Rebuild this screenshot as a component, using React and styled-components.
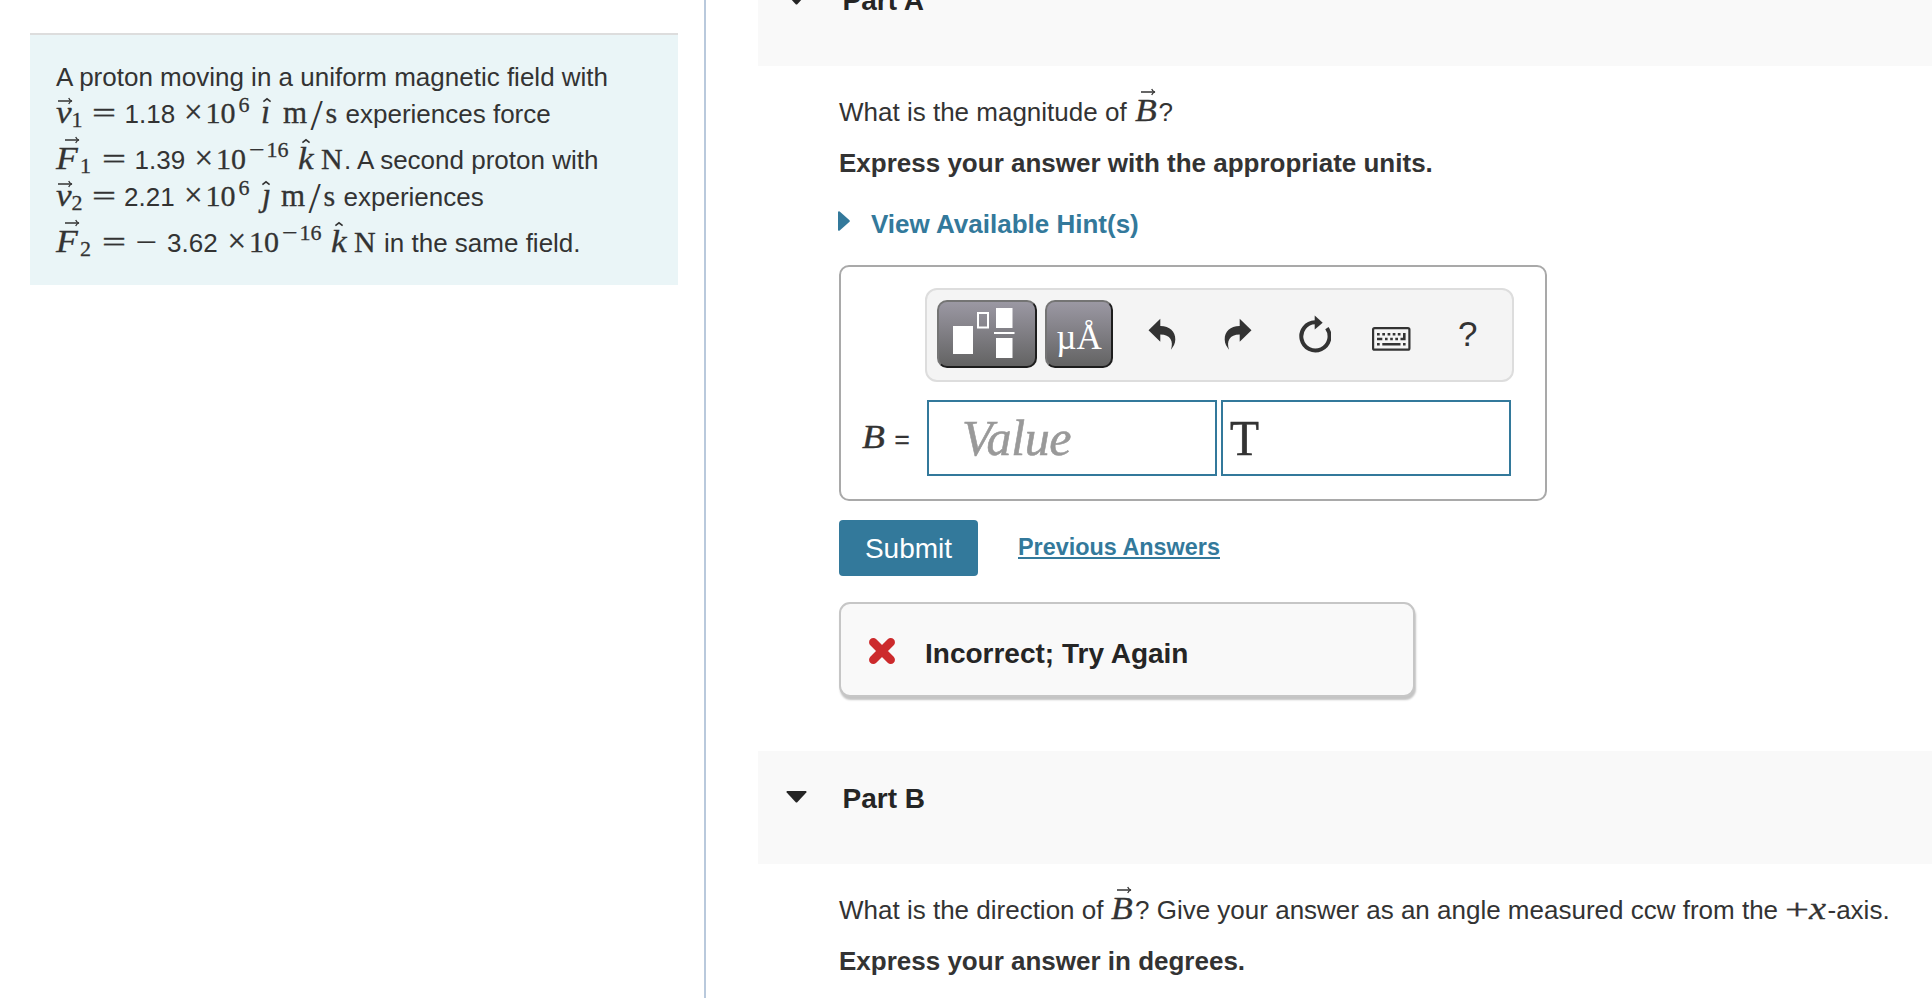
import React from "react"
import styled, { createGlobalStyle } from "styled-components"

const theme = {
  ink: "#333333",
  heading: "#252525",
  teal: "#33799b",
  band: "#f9f9f9",
  red: "#cc2a2c",
}

const { ink, heading, teal, band, red } = theme

const GlobalStyle = createGlobalStyle`
  html, body {
    margin: 0;
    background: #fff;
    overflow: hidden;
  }
`

const Page = styled.div`
  display: flex;
  width: 1932px;
  height: 998px;
  overflow: hidden;
  box-sizing: border-box;
  color: ${ink};
  font-family: "Liberation Sans", Arial, sans-serif;
  font-size: 26px;
  line-height: 36px;
`

const ProblemPane = styled.aside`
  flex: none;
  box-sizing: border-box;
  width: 706px;
  padding: 33px 26px 0 30px;
  border-right: 2px solid #b9c9dc;
`

const ProblemCard = styled.section`
  box-sizing: border-box;
  height: 252px;
  padding: 24px 0 0 26px;
  border-top: 2px solid #dddddd;
  background: #eaf5f7;
`

const Line = styled.div`
  display: flex;
  align-items: baseline;
  height: 36px;
  margin-top: ${(p) => p.$gap || 0}px;
  white-space: pre;
`

const Run = styled.span`
  flex: none;
  width: ${(p) => (p.$w ? `${p.$w}px` : "auto")};
`

const MathRun = styled(Run)`
  font-family: "Liberation Serif", "Times New Roman", serif;
  font-size: ${(p) => p.$size || 30}px;
  line-height: 30px;
  -webkit-text-stroke: 0.3px ${ink};
`

const Script = styled.span`
  font-size: 22px;
  line-height: 0;
  vertical-align: ${(p) => p.$shift}px;
`

const Stretch = styled.span`
  display: inline-block;
  transform: scaleX(${(p) => p.$x});
  transform-origin: left;
`

const Minus = styled(Stretch)`
  margin-right: 5px;
`

const Slash = styled.span`
  font-size: 44px;
  line-height: 0;
  vertical-align: -7px;
  -webkit-text-stroke: 0;
`

const Letter = styled(MathRun)`
  position: relative;
  font-style: italic;

  svg {
    position: absolute;
    left: ${(p) => p.$ax}px;
    top: ${(p) => p.$ay}px;
    overflow: visible;
  }
`

const Arrow = () => (
  <svg width="15" height="8" viewBox="0 0 15 8" fill="none" stroke={ink}>
    <path d="M0 4H13.5" strokeWidth="1.5" />
    <path d="M10.7 1C11.3 2.8 12.3 3.6 14 4C12.3 4.4 11.3 5.2 10.7 7" strokeWidth="1.2" />
  </svg>
)

const Hat = () => (
  <svg width="8" height="4" viewBox="0 0 8 4" fill="none" stroke={ink}>
    <path d="M.4 3.7L4 .8L7.6 3.7" strokeWidth="1.6" />
  </svg>
)

const Velocity = ({ n }) => (
  <>
    <Letter $w={15.5} $size={32} $ax={1.5} $ay={-0.5}><Stretch $x={1.1}>v</Stretch><Arrow /></Letter>
    <MathRun $w={20}><Script $shift={-3.5}>{n}</Script></MathRun>
  </>
)

const Force = ({ n }) => (
  <>
    <Letter $w={24} $size={31} $ax={9} $ay={-8.5}><Stretch $x={1.15}>F</Stretch><Arrow /></Letter>
    <MathRun $w={22}><Script $shift={-3.5}>{n}</Script></MathRun>
  </>
)

const Equals = ({ w }) => (
  <MathRun $w={w}><Stretch $x={1.42}>=</Stretch></MathRun>
)

const Times = () => <MathRun $w={21.5} $size={33}>×</MathRun>

const Exponent = ({ children }) => (
  <MathRun $w={49}>
    <Script $shift={12}><Minus $x={1.25}>−</Minus>{children}</Script>
  </MathRun>
)

const MetersPerSecond = ({ w }) => (
  <>
    <MathRun $w={27.5} $size={31}>m</MathRun>
    <MathRun $w={15}><Slash>/</Slash></MathRun>
    <MathRun $w={w}>s</MathRun>
  </>
)

const UnitK = () => (
  <Letter $w={23} $size={32} $ax={3.5} $ay={-4.5}><Stretch $x={1.1}>k</Stretch><Hat /></Letter>
)

const FieldB = ({ w }) => (
  <Letter $w={w} $size={31} $ax={6} $ay={-8.5}><Stretch $x={1.15}>B</Stretch><Arrow /></Letter>
)

const WorkPane = styled.main`
  flex: 1;
  min-width: 0;
  padding-left: 52px;
`

const PartHeader = styled.header`
  display: flex;
  align-items: flex-start;
  box-sizing: border-box;
  height: 113px;
  margin-top: ${(p) => p.$top}px;
  padding: 30px 0 0 28px;
  background: ${band};

  svg {
    flex: none;
    margin-top: 10px;
  }

  h2 {
    margin: 0 0 0 35.5px;
    color: ${heading};
    font-size: 28px;
    line-height: 36px;
  }
`

const PartBody = styled.section`
  padding: 28px 0 0 81px;
`

const Instruction = styled.p`
  margin: 15px 0 0;
  font-weight: bold;
`

const HintLink = styled.div`
  display: flex;
  align-items: flex-start;
  gap: 21px;
  margin: 25px 0 0 -1px;
  color: ${teal};
  font-weight: bold;

  svg {
    margin-top: 5px;
  }
`

const AnswerBox = styled.div`
  box-sizing: border-box;
  width: 708px;
  height: 236px;
  margin-top: 23px;
  padding: 21px 0 0 20px;
  border: 2px solid #a9a9a9;
  border-radius: 10px;
`

const Toolbar = styled.div`
  display: flex;
  align-items: center;
  box-sizing: border-box;
  width: 589px;
  height: 94px;
  margin-left: 64px;
  padding: 0 0 2px 10px;
  border: 2px solid #dddddd;
  border-radius: 12px;
  background: #f4f4f4;
`

const PaletteButton = styled.button`
  display: flex;
  align-items: center;
  justify-content: center;
  flex: none;
  box-sizing: border-box;
  width: ${(p) => p.$w}px;
  height: 68px;
  margin: 0 8px 0 0;
  padding: ${(p) => p.$pad || 0};
  border: 2px solid;
  border-color: #747474 #1d1d1d #1d1d1d #747474;
  border-radius: 10px;
  background: linear-gradient(#9b98a3, #636363);
  color: #fff;
  font: 35px/40px "Liberation Serif", serif;
`

const ToolSlots = styled.div`
  display: flex;
  align-items: center;
  margin-left: 2.5px;
`

const ToolSlot = styled.div`
  display: flex;
  align-items: center;
  justify-content: center;
  flex: none;
  box-sizing: border-box;
  width: 76.5px;
  height: 68px;
  padding-top: ${(p) => p.$drop || 0}px;
  font-size: 35px;
`

const TemplateIcon = () => (
  <svg width="62" height="52" viewBox="0 0 62 52" fill="#fff">
    <path d="M0 19H20V47H0ZM43 1H59.5V21H43ZM41 25H61.5V27H41ZM43 31H59.5V51H43Z" />
    <path d="M25 6H35V20.5H25Z" fill="none" stroke="#fff" strokeWidth="2" />
  </svg>
)

const CurvedArrow = ({ flip }) => (
  <svg width="28" height="32" viewBox="0 0 28 32" fill={ink}>
    <path
      transform={flip ? "translate(28 0) scale(-1 1)" : undefined}
      d="M.5 12.2L12.3.7V8.1C21.5 8 27.5 13.5 27.3 21.5C27.2 25.6 25.5 28.6 22.9 31.7C25.8 23 22.5 16.4 12.3 16.4V23.8Z"
    />
  </svg>
)

const ResetIcon = () => (
  <svg width="32" height="38" viewBox="0 0 32 38">
    <path d="M16 7.3A14.1 14.1 0 1 0 27.9 13.2" fill="none" stroke={ink} strokeWidth="4" />
    <path d="M15.7.5L23.7 7.8L15.7 14.5Z" fill={ink} />
  </svg>
)

const KeyboardIcon = () => (
  <svg width="39" height="24" viewBox="0 0 39 24" fill={ink}>
    <rect x="1.1" y="1.1" width="36.3" height="21.6" rx="1.5" fill="none" stroke={ink} strokeWidth="2.2" />
    <path d="M5 6H7.7V8.5H5ZM10.3 6H13V8.5H10.3ZM15.6 6H18.3V8.5H15.6ZM20.7 6H23.4V8.5H20.7ZM25.8 6H28.5V8.5H25.8ZM31 6H33.6V13.3H28.5V10.8H31Z" />
    <path d="M5 10.8H10.3V13.3H5ZM13 10.8H15.6V13.3H13ZM18.2 10.8H20.8V13.3H18.2ZM23.3 10.8H26V13.3H23.3ZM5 16H7.7V18.5H5ZM10.3 16H28.5V18.5H10.3ZM31 16H33.6V18.5H31Z" />
  </svg>
)

const EntryRow = styled.div`
  display: flex;
  align-items: center;
  margin-top: 18px;
`

const EntryLabel = styled.label`
  display: flex;
  align-items: baseline;
  flex: none;
  box-sizing: border-box;
  width: 66px;
  height: 38px;
  padding-left: 1px;
  -webkit-text-stroke: 0.4px ${ink};
`

const LabelSymbol = styled.span`
  width: 32.5px;
  font: italic 34px/36px "Liberation Serif", serif;

  span {
    display: inline-block;
    transform: scaleX(1.1);
    transform-origin: left;
  }
`

const Entry = styled.div`
  flex: none;
  box-sizing: border-box;
  width: 290px;
  height: 76px;
  margin-right: 4px;
  padding-left: ${(p) => p.$indent}px;
  border: 2px solid ${teal};
  color: ${(p) => (p.$empty ? "#999999" : ink)};
  font: ${(p) => (p.$empty ? "italic 50px" : "51px")}/72px "Liberation Serif", serif;
  letter-spacing: ${(p) => (p.$empty ? "-0.4px" : "0")};
  -webkit-text-stroke: 0.6px ${(p) => (p.$empty ? "#999999" : ink)};
`

const Actions = styled.div`
  display: flex;
  align-items: flex-start;
  gap: 40px;
  margin-top: 19px;
`

const SubmitButton = styled.button`
  width: 139px;
  height: 56px;
  padding: 2px 0 0;
  border: 0;
  border-radius: 4px;
  background: ${teal};
  color: #fff;
  font: 28px/54px "Liberation Sans", Arial, sans-serif;
`

const PreviousLink = styled.a`
  box-sizing: border-box;
  height: 30px;
  margin-top: 9px;
  border-bottom: 2px solid ${teal};
  color: ${teal};
  font-size: 23.4px;
  font-weight: bold;
  line-height: 36px;
`

const Feedback = styled.div`
  display: flex;
  align-items: center;
  gap: 29px;
  box-sizing: border-box;
  width: 576px;
  height: 95px;
  margin-top: 26px;
  padding: 9px 0 0 27px;
  border: 2px solid #c6c6c6;
  border-radius: 11px;
  background: ${band};
  box-shadow: 1px 3px 2px #c4c4c4;
  color: ${heading};
  font-size: 28px;
  font-weight: bold;

  svg {
    margin-top: -6px;
  }
`

const Part = ({ name, top, children }) => (
  <>
    <PartHeader $top={top}>
      <svg width="21" height="12" viewBox="0 0 21 12" fill={heading}>
        <path d="M1 0H20Q21 .6 20.3 1.5L11.5 11Q10.5 12 9.5 11L.7 1.5Q0 .6 1 0Z" />
      </svg>
      <h2>{name}</h2>
    </PartHeader>
    <PartBody>{children}</PartBody>
  </>
)

const Problem = () => (
  <ProblemCard>
    <Line>
      <Run>A proton moving in a uniform magnetic field with</Run>
    </Line>
    <Line $gap={1}>
      <Velocity n="1" />
      <Equals w={33} />
      <Run $w={59.5}>1.18</Run>
      <Times />
      <MathRun $w={33}>10</MathRun>
      <MathRun $w={22.5}><Script $shift={11.5}>6</Script></MathRun>
      <Letter $w={22} $size={33} $ax={1.7} $ay={1}>ı<Hat /></Letter>
      <MetersPerSecond w={20} />
      <Run>experiences force</Run>
    </Line>
    <Line $gap={10}>
      <Force n="1" />
      <Equals w={32.5} />
      <Run $w={60}>1.39</Run>
      <Times />
      <MathRun $w={33}>10</MathRun>
      <Exponent>16</Exponent>
      <UnitK />
      <MathRun $w={23}>N</MathRun>
      <Run>. A second proton with</Run>
    </Line>
    <Line $gap={1}>
      <Velocity n="2" />
      <Equals w={32.5} />
      <Run $w={60}>2.21</Run>
      <Times />
      <MathRun $w={33}>10</MathRun>
      <MathRun $w={23.5}><Script $shift={11.5}>6</Script></MathRun>
      <Letter $w={19} $size={33} $ax={0} $ay={1}>ȷ<Hat /></Letter>
      <MetersPerSecond w={20} />
      <Run>experiences</Run>
    </Line>
    <Line $gap={10}>
      <Force n="2" />
      <Equals w={34} />
      <MathRun $w={31}><Stretch $x={1.25}>−</Stretch></MathRun>
      <Run $w={60.5}>3.62</Run>
      <Times />
      <MathRun $w={33}>10</MathRun>
      <Exponent>16</Exponent>
      <UnitK />
      <MathRun $w={30}>N</MathRun>
      <Run>in the same field.</Run>
    </Line>
  </ProblemCard>
)

const AnswerEntry = () => (
  <AnswerBox>
    <Toolbar>
      <PaletteButton $w={100} $pad="0 6px 3px 0"><TemplateIcon /></PaletteButton>
      <PaletteButton $w={68} $pad="7px 0 0"><span>µÅ</span></PaletteButton>
      <ToolSlots>
        <ToolSlot><CurvedArrow /></ToolSlot>
        <ToolSlot><CurvedArrow flip /></ToolSlot>
        <ToolSlot><ResetIcon /></ToolSlot>
        <ToolSlot $drop={9}><KeyboardIcon /></ToolSlot>
        <ToolSlot>?</ToolSlot>
      </ToolSlots>
    </Toolbar>
    <EntryRow>
      <EntryLabel>
        <LabelSymbol><span>B</span></LabelSymbol>=
      </EntryLabel>
      <Entry $empty $indent={33}>Value</Entry>
      <Entry $indent={7}><Stretch $x={0.93}>T</Stretch></Entry>
    </EntryRow>
  </AnswerBox>
)

const App = () => (
  <Page>
    <GlobalStyle />
    <ProblemPane>
      <Problem />
    </ProblemPane>
    <WorkPane>
      <Part name="Part A" top={-47}>
        <Line>
          <Run $w={295.5}>What is the magnitude of</Run>
          <FieldB w={24} />
          <Run>?</Run>
        </Line>
        <Instruction>Express your answer with the appropriate units.</Instruction>
        <HintLink>
          <svg width="12" height="20" viewBox="0 0 12 20" fill={teal}>
            <path d="M0 1Q.5 -.4 1.7 .5L11.5 9.2Q12.2 10 11.5 10.8L1.7 19.5Q.5 20.4 0 19Z" />
          </svg>
          View Available Hint(s)
        </HintLink>
        <AnswerEntry />
        <Actions>
          <SubmitButton>Submit</SubmitButton>
          <PreviousLink>Previous Answers</PreviousLink>
        </Actions>
        <Feedback>
          <svg width="28" height="28" viewBox="0 0 28 28" stroke={red} strokeWidth="8.5" strokeLinecap="round">
            <path d="M5.3 5.3L22.7 22.7M22.7 5.3L5.3 22.7" />
          </svg>
          Incorrect; Try Again
        </Feedback>
      </Part>
      <Part name="Part B" top={54}>
        <Line>
          <Run $w={272}>What is the direction of</Run>
          <FieldB w={24} />
          <Run $w={650}>? Give your answer as an angle measured ccw from the</Run>
          <MathRun $w={24}><Stretch $x={1.42}>+</Stretch></MathRun>
          <Letter $w={18.5} $size={32}><Stretch $x={1.2}>x</Stretch></Letter>
          <Run>-axis.</Run>
        </Line>
        <Instruction>Express your answer in degrees.</Instruction>
      </Part>
    </WorkPane>
  </Page>
)

export default App
